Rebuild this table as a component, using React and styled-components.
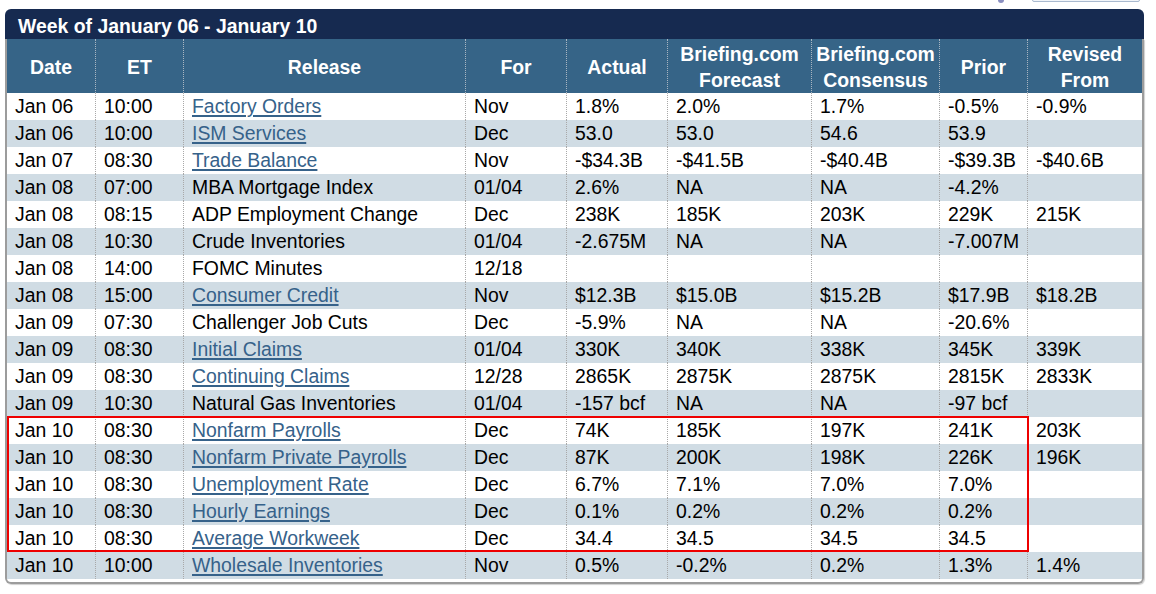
import React from "react";
import styled, { createGlobalStyle } from "styled-components";

const Global = createGlobalStyle`
  html, body { margin: 0; padding: 0; background: #ffffff; }
  body { font-family: Arial, "Liberation Sans", Helvetica, sans-serif; }
`;

const Page = styled.div`
  width: 1156px;
  height: 594px;
  overflow: hidden;
  background: #fff;
`;

const TopStrip = styled.div`
  height: 9px;
  display: flex;
  justify-content: flex-end;
  align-items: flex-end;
  gap: 28px;
  padding-right: 16px;
  overflow: hidden;
`;

const StripDot = styled.span`
  width: 6px;
  height: 6px;
  border-radius: 50%;
  background: #8a8fc0;
  margin-bottom: 6px;
`;

const StripBox = styled.span`
  width: 106px;
  height: 12px;
  border: 1px solid #a9b9cf;
  background: #f2f5f9;
  border-radius: 2px;
  margin-bottom: 7px;
`;

const Panel = styled.div`
  margin-left: 5px;
  width: 1139px;
`;

const TitleBar = styled.div`
  height: 30px;
  background: #162a50;
  border-radius: 6px 6px 0 0;
  color: #fff;
  font-weight: bold;
  font-size: 19.4px;
  line-height: 35px;
  padding-left: 13px;
  white-space: nowrap;
  overflow: hidden;
`;

const Body = styled.div`
  border: 2px solid #9c9c9c;
  border-top: none;
  border-radius: 0 0 6px 6px;
  padding-bottom: 3px;
  box-shadow: 1px 1px 1px #d0d0d0;
`;

const Grid = styled.div`
  display: grid;
  grid-template-columns: 88px 88px 282px 101px 101px 144px 128px 88px 1fr;
  grid-template-rows: 54px;
  grid-auto-rows: 27px;
  font-size: 19.4px;
`;

const HeadCell = styled.div`
  grid-row: 1;
  grid-column: ${(p) => p.$col};
  background: #366487;
  color: #fff;
  font-weight: bold;
  line-height: 26px;
  text-align: center;
  display: flex;
  align-items: center;
  justify-content: center;
  padding-top: 1px;
  border-left: ${(p) => (p.$col === 1 ? "none" : "1px dotted #a9b6c2")};
`;

const Cell = styled.div`
  grid-row: ${(p) => p.$row};
  grid-column: ${(p) => p.$col};
  background: ${(p) => (p.$alt ? "#d0dce4" : "#ffffff")};
  color: #000;
  line-height: 27px;
  padding-left: 8px;
  white-space: nowrap;
  overflow: hidden;
  border-left: ${(p) => (p.$col === 1 ? "none" : "1px dotted #a8a8a8")};
`;

const Link = styled.a`
  color: #36628a;
  text-decoration: underline;
  text-decoration-thickness: 2px;
  text-underline-offset: 2px;
  cursor: pointer;
`;

const Highlight = styled.div`
  grid-column: 1 / 9;
  grid-row: ${(p) => `${p.$from} / ${p.$to}`};
  border: 2px solid #ee0000;
  margin: -1px -2px 0 0;
  pointer-events: none;
  z-index: 1;
`;

const headers = [
  ["Date"],
  ["ET"],
  ["Release"],
  ["For"],
  ["Actual"],
  ["Briefing.com", "Forecast"],
  ["Briefing.com", "Consensus"],
  ["Prior"],
  ["Revised", "From"],
];

const rows = [
  ["Jan 06", "10:00", "Factory Orders", true, "Nov", "1.8%", "2.0%", "1.7%", "-0.5%", "-0.9%"],
  ["Jan 06", "10:00", "ISM Services", true, "Dec", "53.0", "53.0", "54.6", "53.9", ""],
  ["Jan 07", "08:30", "Trade Balance", true, "Nov", "-$34.3B", "-$41.5B", "-$40.4B", "-$39.3B", "-$40.6B"],
  ["Jan 08", "07:00", "MBA Mortgage Index", false, "01/04", "2.6%", "NA", "NA", "-4.2%", ""],
  ["Jan 08", "08:15", "ADP Employment Change", false, "Dec", "238K", "185K", "203K", "229K", "215K"],
  ["Jan 08", "10:30", "Crude Inventories", false, "01/04", "-2.675M", "NA", "NA", "-7.007M", ""],
  ["Jan 08", "14:00", "FOMC Minutes", false, "12/18", "", "", "", "", ""],
  ["Jan 08", "15:00", "Consumer Credit", true, "Nov", "$12.3B", "$15.0B", "$15.2B", "$17.9B", "$18.2B"],
  ["Jan 09", "07:30", "Challenger Job Cuts", false, "Dec", "-5.9%", "NA", "NA", "-20.6%", ""],
  ["Jan 09", "08:30", "Initial Claims", true, "01/04", "330K", "340K", "338K", "345K", "339K"],
  ["Jan 09", "08:30", "Continuing Claims", true, "12/28", "2865K", "2875K", "2875K", "2815K", "2833K"],
  ["Jan 09", "10:30", "Natural Gas Inventories", false, "01/04", "-157 bcf", "NA", "NA", "-97 bcf", ""],
  ["Jan 10", "08:30", "Nonfarm Payrolls", true, "Dec", "74K", "185K", "197K", "241K", "203K"],
  ["Jan 10", "08:30", "Nonfarm Private Payrolls", true, "Dec", "87K", "200K", "198K", "226K", "196K"],
  ["Jan 10", "08:30", "Unemployment Rate", true, "Dec", "6.7%", "7.1%", "7.0%", "7.0%", ""],
  ["Jan 10", "08:30", "Hourly Earnings", true, "Dec", "0.1%", "0.2%", "0.2%", "0.2%", ""],
  ["Jan 10", "08:30", "Average Workweek", true, "Dec", "34.4", "34.5", "34.5", "34.5", ""],
  ["Jan 10", "10:00", "Wholesale Inventories", true, "Nov", "0.5%", "-0.2%", "0.2%", "1.3%", "1.4%"],
];

export default function App() {
  return (
    <Page>
      <Global />
      <TopStrip>
        <StripDot />
        <StripBox />
      </TopStrip>
      <Panel>
        <TitleBar>Week of January 06 - January 10</TitleBar>
        <Body>
          <Grid>
            {headers.map((h, i) => (
              <HeadCell key={"h" + i} $col={i + 1}>
                <span>
                  {h.map((line, j) => (
                    <React.Fragment key={j}>
                      {j > 0 && <br />}
                      {line}
                    </React.Fragment>
                  ))}
                </span>
              </HeadCell>
            ))}
            {rows.map((r, ri) => {
              const alt = ri % 2 === 1;
              const row = ri + 2;
              const [date, et, rel, isLink, ...rest] = r;
              const values = [date, et, isLink ? <Link>{rel}</Link> : rel, ...rest];
              return values.map((v, ci) => (
                <Cell key={ri + "-" + ci} $row={row} $col={ci + 1} $alt={alt}>
                  {v}
                </Cell>
              ));
            })}
            <Highlight $from={14} $to={19} />
          </Grid>
        </Body>
      </Panel>
    </Page>
  );
}
